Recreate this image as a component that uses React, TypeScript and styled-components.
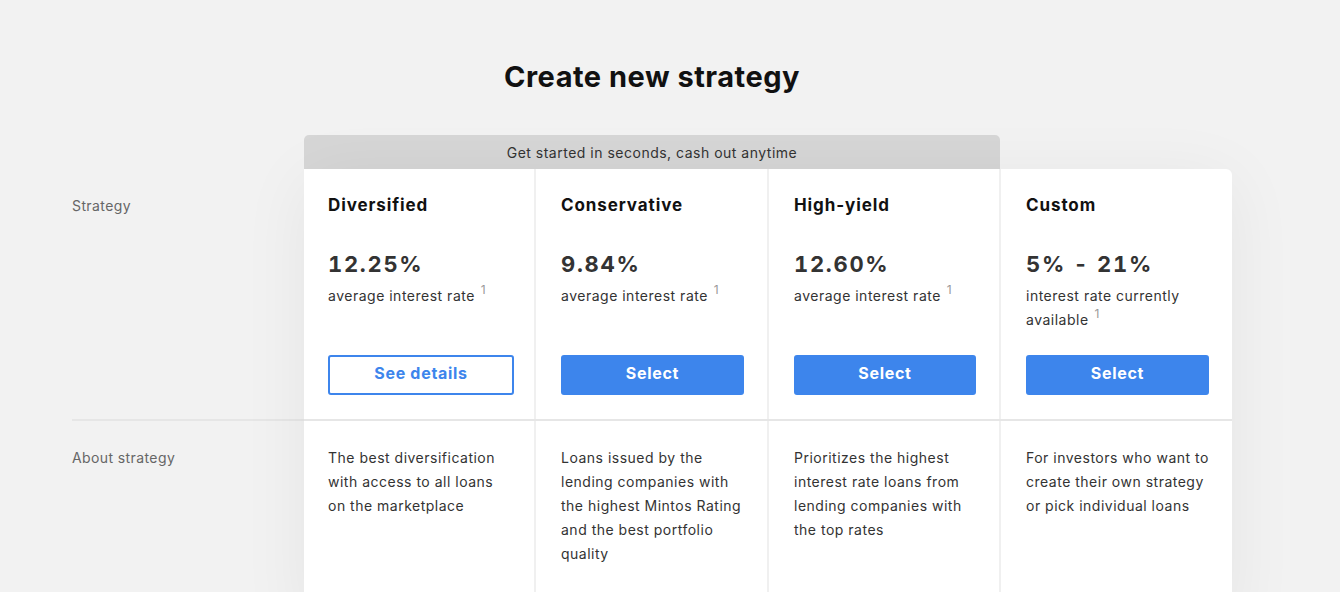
import React from 'react';
import styled, { createGlobalStyle } from 'styled-components';

type Strategy = {
	name: string;
	rate: string;
	rateLabel: string;
	about: string;
	outline?: boolean;
	action: string;
};

const strategies: Strategy[] = [
	{
		name: 'Diversified',
		rate: '12.25%',
		rateLabel: 'average interest rate',
		about: 'The best diversification with access to all loans on the marketplace',
		outline: true,
		action: 'See details',
	},
	{
		name: 'Conservative',
		rate: '9.84%',
		rateLabel: 'average interest rate',
		about: 'Loans issued by the lending companies with the highest Mintos Rating and the best portfolio quality',
		action: 'Select',
	},
	{
		name: 'High-yield',
		rate: '12.60%',
		rateLabel: 'average interest rate',
		about: 'Prioritizes the highest interest rate loans from lending companies with the top rates',
		action: 'Select',
	},
	{
		name: 'Custom',
		rate: '5% - 21%',
		rateLabel: 'interest rate currently available',
		about: 'For investors who want to create their own strategy or pick individual loans',
		action: 'Select',
	},
];

const GlobalStyle = createGlobalStyle`
	html, body {
		margin: 0;
		padding: 0;
		background: #f2f2f2;
		font-family: Inter, 'Noto Sans', sans-serif;
		-webkit-font-smoothing: antialiased;
	}
`;

const Page = styled.div`
	width: 1340px;
	height: 592px;
	overflow: hidden;
	padding-top: 59px;
	box-sizing: border-box;
`;

const Title = styled.h1`
	margin: 0 0 0 304px;
	width: 696px;
	text-align: center;
	font-size: 29px;
	line-height: 36px;
	font-weight: 700;
	color: #111;
	letter-spacing: 0.5px;
`;

const Table = styled.div`
	display: flex;
	margin: 40px 0 0 72px;
`;

const Labels = styled.div`
	width: 232px;
	display: flex;
	flex-direction: column;
	padding-top: 34px;
`;

const LabelCell = styled.div<{ $height: number }>`
	height: ${(p) => p.$height}px;
	padding-top: 25px;
	box-sizing: border-box;
	font-size: 14px;
	line-height: 24px;
	color: #666;
	letter-spacing: 0.4px;
`;

const Divider = styled.div`
	height: 2px;
	background: #e6e6e6;
`;

const Board = styled.div`
	display: flex;
	flex-direction: column;
	width: 928px;
`;

const Banner = styled.div`
	width: 696px;
	height: 34px;
	background: #d6d6d6;
	border-radius: 5px 5px 0 0;
	display: flex;
	align-items: center;
	justify-content: center;
	font-size: 14px;
	color: #333;
	letter-spacing: 0.5px;
`;

const Panel = styled.div`
	background: #fff;
	border-radius: 0 6px 0 0;
	box-shadow: 0 10px 70px rgba(0, 0, 0, 0.06);
`;

const Row = styled.div<{ $height: number }>`
	display: grid;
	grid-template-columns: 230px 233px 232px 233px;
	height: ${(p) => p.$height}px;
`;

const Cell = styled.div`
	display: flex;
	flex-direction: column;
	padding: 24px 23px 24px 25px;
	box-sizing: border-box;
	border-left: 2px solid #f0f0f0;

	&:first-child {
		border-left: none;
		padding-left: 24px;
		padding-right: 20px;
	}
`;

const Name = styled.div`
	font-size: 17px;
	line-height: 24px;
	font-weight: 700;
	color: #111;
	letter-spacing: 0.9px;
`;

const Rate = styled.div`
	margin-top: 33px;
	font-size: 22px;
	line-height: 28px;
	font-weight: 700;
	color: #333;
	letter-spacing: 1.7px;
	font-variant-numeric: tabular-nums;
`;

const RateLabel = styled.div`
	margin-top: 6px;
	font-size: 14px;
	line-height: 24px;
	color: #333;
	letter-spacing: 0.5px;
`;

const Note = styled.sup`
	margin-left: 6px;
	font-size: 12px;
	color: #999;
	vertical-align: 7px;
	line-height: 0;
`;

const Button = styled.button<{ $outline?: boolean }>`
	margin-top: auto;
	height: 40px;
	width: 100%;
	padding: 0 0 4px;
	border-radius: 3px;
	border: 2px solid #3d85ec;
	background: ${(p) => (p.$outline ? '#fff' : '#3d85ec')};
	color: ${(p) => (p.$outline ? '#3d85ec' : '#fff')};
	font-family: inherit;
	font-size: 16px;
	font-weight: 700;
	letter-spacing: 0.7px;
	cursor: pointer;
`;

const About = styled.div`
	padding-top: 1px;
	font-size: 14px;
	line-height: 24px;
	color: #333;
	letter-spacing: 0.5px;
`;

const App = () => {
	return (
		<Page>
			<GlobalStyle />
			<Title>Create new strategy</Title>
			<Table>
				<Labels>
					<LabelCell $height={250}>Strategy</LabelCell>
					<Divider />
					<LabelCell $height={200}>About strategy</LabelCell>
				</Labels>
				<Board>
					<Banner>Get started in seconds, cash out anytime</Banner>
					<Panel>
						<Row $height={250}>
							{strategies.map((s) => (
								<Cell key={s.name}>
									<Name>{s.name}</Name>
									<Rate>{s.rate}</Rate>
									<RateLabel>
										{s.rateLabel}
										<Note>1</Note>
									</RateLabel>
									<Button $outline={s.outline}>{s.action}</Button>
								</Cell>
							))}
						</Row>
						<Divider />
						<Row $height={200}>
							{strategies.map((s) => (
								<Cell key={s.name}>
									<About>{s.about}</About>
								</Cell>
							))}
						</Row>
					</Panel>
				</Board>
			</Table>
		</Page>
	);
};

export default App;
